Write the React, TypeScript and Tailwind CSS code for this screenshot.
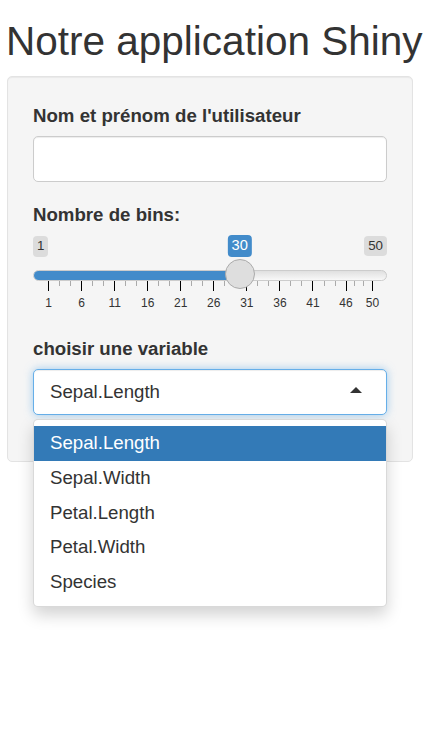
import React from 'react';

const CHOICES = ['Sepal.Length', 'Sepal.Width', 'Petal.Length', 'Petal.Width', 'Species'];
const MIN = 1;
const MAX = 50;
const VALUE = 30;
const MAJORS = [1, 6, 11, 16, 21, 26, 31, 36, 41, 46, 50];

// handle centres run from 15px to 339px inside the 354px wide slider
const pos = (v: number) => 15 + ((v - MIN) / (MAX - MIN)) * 324;

function RangeSlider() {
    const minors: number[] = [];
    for (let i = 0; i < MAJORS.length - 1; i++) {
        const a = MAJORS[i];
        const b = MAJORS[i + 1];
        minors.push(a + (b - a) / 3, a + (2 * (b - a)) / 3);
    }
    const x = pos(VALUE);

    return (
        <div className="relative w-full pb-[35px]">
            {/* min / max bubbles */}
            <div className="flex h-[22px] items-start justify-between pt-[1px] text-[13.33px] leading-[18px] text-[#333]">
                <span className="rounded-[4px] bg-[#dcdcdc] px-[4px] py-[1.5px]">{MIN}</span>
                <span className="rounded-[4px] bg-[#dcdcdc] px-[4px] py-[1px]">{MAX}</span>
            </div>
            {/* current value */}
            <span
                className="absolute top-0 -translate-x-1/2 rounded-[4px] bg-[#428bca] px-[4px] py-[1.5px] text-[14.67px] leading-[19px] text-white"
                style={{ left: x }}
            >
                {VALUE}
            </span>

            {/* track */}
            <div className="mt-[13px] h-[11px] overflow-hidden rounded-full border border-[#cccccc] bg-gradient-to-b from-[#e0e0e0] to-[#f8f8f8]">
                <div className="-my-px -ml-px h-[11px] bg-[#428bca]" style={{ width: x }} />
            </div>

            {/* grid */}
            {minors.map((v, i) => (
                <div
                    key={'m' + i}
                    className="absolute top-[46px] h-[5px] w-px bg-[#aaaaaa]"
                    style={{ left: pos(v) }}
                />
            ))}
            {MAJORS.map((v) => (
                <React.Fragment key={v}>
                    <div className="absolute top-[46px] h-[10px] w-px bg-black" style={{ left: pos(v) }} />
                    <span
                        className="absolute top-[61px] -translate-x-1/2 text-[12px] leading-[14px] text-[#333]"
                        style={{ left: pos(v) + 0.5 }}
                    >
                        {v}
                    </span>
                </React.Fragment>
            ))}

            {/* handle */}
            <div
                className="absolute top-[24px] z-10 h-[30px] w-[30px] -translate-x-1/2 rounded-full border border-[#ababab] bg-[#dedede]"
                style={{ left: x }}
            />
        </div>
    );
}

export default function App() {
    return (
        <div className="min-h-[739px] bg-white pl-[7px] font-['Liberation_Sans',Arial,sans-serif] text-[#333]">
            <h1 className="-ml-[1px] pt-[19px] mb-[13px] text-[40.5px] font-normal leading-[44px]">
                Notre application Shiny
            </h1>

            <div className="w-[406px] rounded-[5px] border border-[#e3e3e3] bg-[#f5f5f5] px-[25px] pt-[26px] pb-[26px] shadow-[inset_0_1px_1px_rgba(0,0,0,0.05)]">
                {/* text input */}
                <div className="mb-[20px]">
                    <label className="mb-[6.67px] block text-[18.67px] font-bold leading-[26.67px]">
                        Nom et prénom de l'utilisateur
                    </label>
                    <input
                        type="text"
                        className="block h-[45.33px] w-full rounded-[5px] border border-[#cccccc] bg-white px-[16px] text-[18.67px] shadow-[inset_0_1px_1px_rgba(0,0,0,0.075)] outline-none"
                    />
                </div>

                {/* slider */}
                <div className="mb-[20px]">
                    <label className="mb-[6.67px] block text-[18.67px] font-bold leading-[26.67px]">
                        Nombre de bins:
                    </label>
                    <RangeSlider />
                </div>

                {/* select */}
                <div className="mb-[20px]">
                    <label className="mb-[6.67px] block text-[18.67px] font-bold leading-[26.67px]">
                        choisir une variable
                    </label>
                    <div className="relative mt-[4px]">
                        <div className="flex h-[45.33px] items-center justify-between rounded-[5px] border border-[#66afe9] bg-white pl-[16px] pr-[24px] text-[18.67px] shadow-[inset_0_1px_1px_rgba(0,0,0,0.075),0_0_8px_rgba(102,175,233,0.6)]">
                            <span>Sepal.Length</span>
                            <svg width="12" height="6" viewBox="0 0 12 6" className="mb-[3px]">
                                <polygon points="0,6 6,0 12,6" fill="#333" />
                            </svg>
                        </div>

                        <div className="absolute left-0 right-0 top-[calc(100%+4px)] z-20 rounded-[5px] border border-[rgba(0,0,0,0.15)] bg-white py-[6.67px] shadow-[0_8px_16px_rgba(0,0,0,0.175)]">
                            {CHOICES.map((c, i) => (
                                <div
                                    key={c}
                                    className={`h-[34.67px] px-[16px] text-[18.67px] leading-[34.67px] ${
                                        i === 0 ? 'bg-[#337ab7] text-white' : 'text-[#333]'
                                    }`}
                                >
                                    {c}
                                </div>
                            ))}
                        </div>
                    </div>
                </div>
            </div>
        </div>
    );
}
